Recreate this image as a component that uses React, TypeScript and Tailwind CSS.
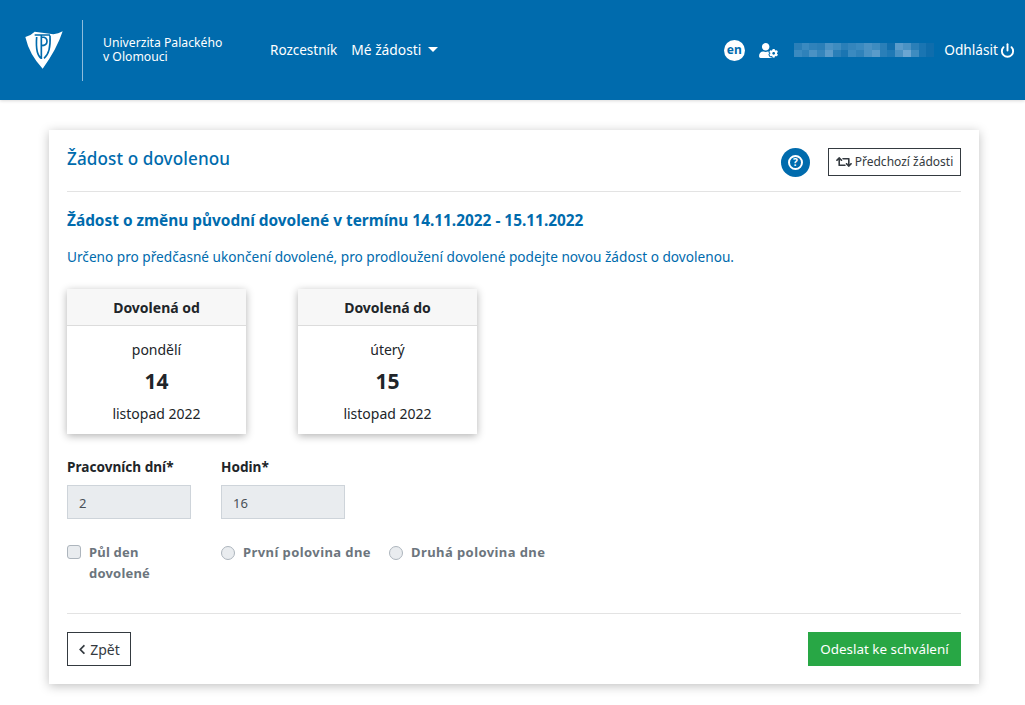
import React from 'react';
import { FaUserCog, FaChevronLeft, FaRetweet } from 'react-icons/fa';
import { FiPower } from 'react-icons/fi';

const mosaicTop = ['#2a7fb8', '#3a8ac0', '#2f82ba', '#2a7fb8', '#4a92c4', '#3e8cc0', '#2a7fb8', '#3485bc', '#3a8ac0', '#4a92c4', '#3e8cc0', '#2a7fb8', '#116fae', '#5a9bca', '#4a92c4', '#2a7fb8', '#1a75b2', '#0f6dac'];
const mosaicBottom = ['#3a8ac0', '#2f82ba', '#4a92c4', '#3485bc', '#5a9bca', '#2a7fb8', '#1a75b2', '#3a8ac0', '#2f82ba', '#4a92c4', '#5a9bca', '#2a7fb8', '#1f79b5', '#4a92c4', '#6ba6d2', '#3e8cc0', '#1a75b2', '#0f6dac'];

const Logo = () => (
  <svg width="38" height="38" viewBox="75 94 114 114">
    <path d="M76 112 Q92 108 104 96 L160 104 Q175 102 188 95 Q170 150 128 207 Q88 165 76 112Z" fill="#fff" />
    <path d="M104 106 H150 M110 112 Q106 165 124 176 M124 106 V178 M124 112 Q142 112 141 126 Q140 138 124 138 M150 108 Q153 160 132 176" stroke="#006bad" strokeWidth="5" fill="none" />
  </svg>
);

const DateCard = ({ title, day, num, date }: { title: string; day: string; num: string; date: string }) => (
  <div className="w-[179px] bg-white shadow-[0_2px_8px_rgba(0,0,0,0.3)]">
    <div className="h-[37px] flex items-center justify-center bg-[#f7f7f7] border-b border-[#dcdcdc] text-[14px] font-bold text-[#212529]">{title}</div>
    <div className="h-[108px] flex flex-col items-center text-[14px] text-[#212529]">
      <div className="mt-[14px] h-[20px] leading-[20px]">{day}</div>
      <div className="mt-[7px] h-[28px] leading-[28px] text-[21px] font-bold">{num}</div>
      <div className="mt-[9px] h-[20px] leading-[20px]">{date}</div>
    </div>
  </div>
);

const Radio = ({ label }: { label: string }) => (
  <div className="flex items-center gap-[8px] h-[20px]">
    <span className="w-[14px] h-[14px] rounded-full border border-[#adb5bd] bg-[#e9ecef]" />
    <span className="text-[13px] font-bold text-[#6c757d] tracking-[0.42px]">{label}</span>
  </div>
);

export default function App() {
  return (
    <div className="min-h-[705px] bg-white font-['Noto_Sans',sans-serif]">
      {/* Header */}
      <header className="h-[100px] bg-[#006bad] flex items-center text-white shadow-[0_1px_3px_rgba(0,0,0,0.15)]">
        <div className="ml-[25px] w-[38px] h-[38px] mb-[1px]">
          <Logo />
        </div>
        <div className="ml-[19px] w-px h-[61px] bg-[#8fbcdc]" />
        <div className="ml-[20px] text-[12.2px] leading-[14px] w-[167px]">
          Univerzita Palackého
          <br />v Olomouci
        </div>
        <span className="text-[13.5px]">Rozcestník</span>
        <span className="text-[13.8px] ml-[14px]">Mé žádosti</span>
        <span className="ml-[7px] mb-[2px] w-0 h-0 border-x-[5px] border-x-transparent border-t-[5px] border-t-white" />
        <div className="ml-auto mr-[10px] flex items-center">
          <span className="w-[21px] h-[21px] rounded-full bg-white text-[#006bad] text-[12px] font-bold flex items-center justify-center">en</span>
          <FaUserCog className="ml-[14px] w-[19px] h-[15px]" />
          <div className="ml-[16px] mr-[10px] flex flex-col">
            <div className="flex">
              {mosaicTop.map((c, i) => (
                <span key={i} className="w-[7.8px] h-[7px]" style={{ backgroundColor: c }} />
              ))}
            </div>
            <div className="flex">
              {mosaicBottom.map((c, i) => (
                <span key={i} className="w-[7.8px] h-[7px]" style={{ backgroundColor: c }} />
              ))}
            </div>
          </div>
          <span className="text-[13.7px]">Odhlásit</span>
          <FiPower className="ml-[2px] w-[15px] h-[15px]" strokeWidth={3} />
        </div>
      </header>

      {/* Card */}
      <main className="mx-[49px] mt-[30px] w-[930px] h-[554px] bg-white shadow-[0_2px_10px_rgba(0,0,0,0.25)] px-[18px]">
        <div className="h-[62px] flex items-center border-b border-[#e3e3e3]">
          <h1 className="text-[17.1px] font-medium text-[#006bad] tracking-[0.1px] mb-[3px]">Žádost o dovolenou</h1>
          <div className="ml-auto mt-[3px] flex items-center">
            <span className="w-[29px] h-[29px] rounded-full bg-[#006bad] flex items-center justify-center">
              <span className="w-[15px] h-[15px] rounded-full border-2 border-white text-white text-[10px] font-bold leading-none flex items-center justify-center">?</span>
            </span>
            <button className="ml-[18px] w-[133px] h-[28px] border border-[#343a40] flex items-center justify-center gap-[3px] text-[12px] text-[#343a40]">
              <FaRetweet className="w-[16px] h-[14px]" />
              Předchozí žádosti
            </button>
          </div>
        </div>

        <h2 className="mt-[19px] h-[20px] leading-[20px] text-[15.4px] font-bold text-[#006bad]">
          Žádost o změnu původní dovolené v termínu 14.11.2022 - 15.11.2022
        </h2>
        <p className="mt-[16px] h-[20px] leading-[20px] text-[13.65px] text-[#006bad]">
          Určeno pro předčasné ukončení dovolené, pro prodloužení dovolené podejte novou žádost o dovolenou.
        </p>

        <div className="mt-[22px] flex gap-[52px]">
          <DateCard title="Dovolená od" day="pondělí" num="14" date="listopad 2022" />
          <DateCard title="Dovolená do" day="úterý" num="15" date="listopad 2022" />
        </div>

        <div className="mt-[23px] flex gap-[30px]">
          <div className="w-[124px]">
            <label className="block h-[20px] leading-[20px] text-[13.6px] font-bold text-[#212529]">Pracovních dní*</label>
            <div className="mt-[8px] h-[34px] bg-[#e9ecef] border border-[#ced4da] flex items-center pt-[3px] px-[11px] text-[13px] text-[#495057]">2</div>
          </div>
          <div className="w-[124px]">
            <label className="block h-[20px] leading-[20px] text-[13.6px] font-bold text-[#212529]">Hodin*</label>
            <div className="mt-[8px] h-[34px] bg-[#e9ecef] border border-[#ced4da] flex items-center pt-[3px] px-[11px] text-[13px] text-[#495057]">16</div>
          </div>
        </div>

        <div className="mt-[23px] flex">
          <div className="w-[154px] flex gap-[8px]">
            <span className="mt-[3px] w-[14px] h-[14px] rounded-[3px] border border-[#adb5bd] bg-[#e9ecef] shrink-0" />
            <span className="text-[13px] leading-[21px] font-bold text-[#6c757d] tracking-[0.2px] w-[80px]">Půl den dovolené</span>
          </div>
          <div className="flex gap-[18px] mt-[1px]">
            <Radio label="První polovina dne" />
            <Radio label="Druhá polovina dne" />
          </div>
        </div>

        <div className="mt-[29px] border-t border-[#e3e3e3] pt-[18px] flex justify-between">
          <button className="w-[64px] h-[34px] border border-[#343a40] flex items-center justify-center gap-[4px] text-[14px] text-[#343a40]">
            <FaChevronLeft className="w-[8px] h-[11px]" />
            Zpět
          </button>
          <button className="w-[153px] h-[34px] bg-[#28a745] text-white text-[13.4px]">Odeslat ke schválení</button>
        </div>
      </main>
    </div>
  );
}
